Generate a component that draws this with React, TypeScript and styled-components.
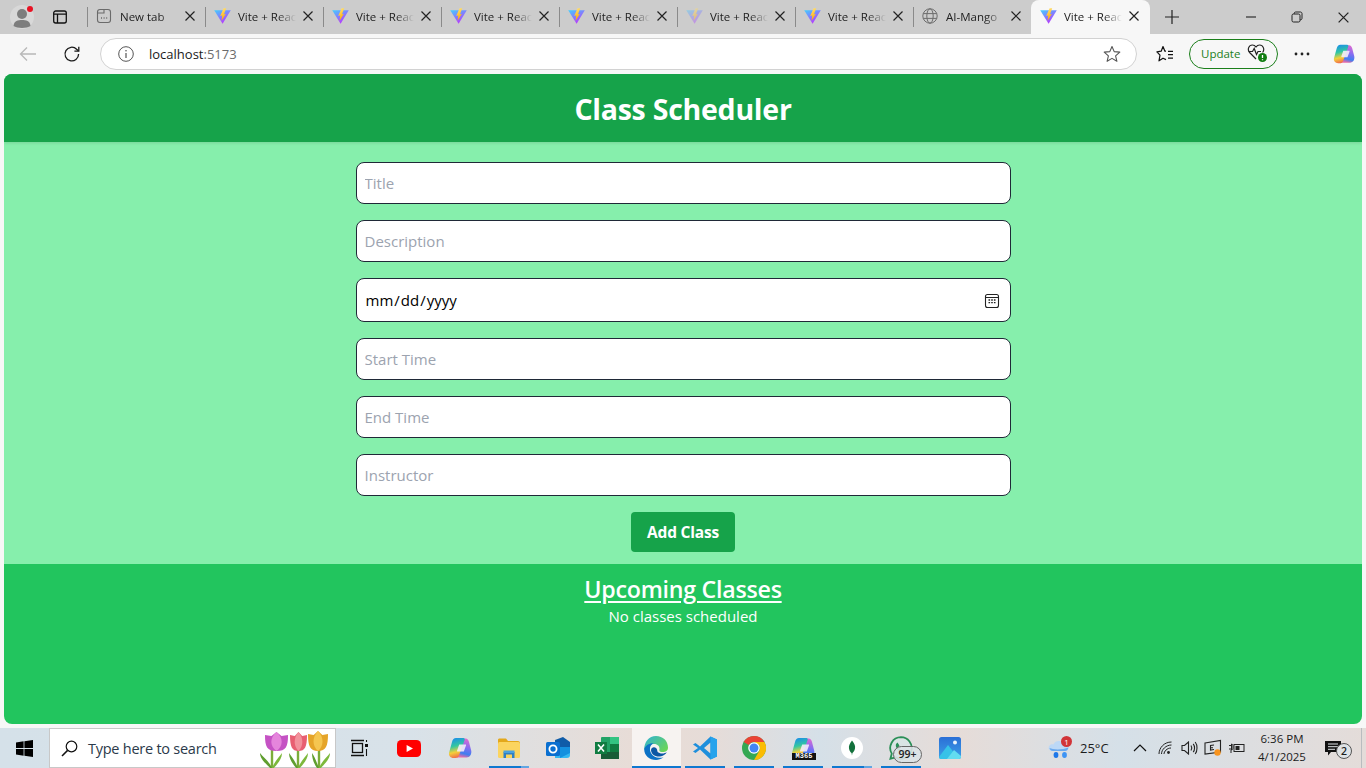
import React from "react";
import styled, { createGlobalStyle } from "styled-components";

const FONT = `"Open Sans", "Noto Sans", "Liberation Sans", sans-serif`;

const CALENDAR = `url("data:image/svg+xml,%3Csvg xmlns='http://www.w3.org/2000/svg' width='16' height='16' viewBox='0 0 16 16' fill='none' stroke='%23222' stroke-width='1.1'%3E%3Crect x='1.5' y='1.5' width='13' height='13' rx='2'/%3E%3Cpath d='M1.5 4.5H14.5'/%3E%3Cpath d='M4.5 7h1.6M7.2 7h1.6M9.9 7h1.6M4.5 9.6h1.6M7.2 9.6h1.6M9.9 9.6h1.6' stroke-width='1.4'/%3E%3C/svg%3E")`;

const Global = createGlobalStyle`
  html, body { margin: 0; padding: 0; height: 768px; overflow: hidden; }
  * { box-sizing: border-box; }
  body { font-family: ${FONT}; background: #f7f7f7; }
`;

const Screen = styled.div`
  width: 1366px;
  height: 768px;
  display: flex;
  flex-direction: column;
  overflow: hidden;
`;

/* ---------- browser tab strip ---------- */
const TabStrip = styled.div`
  height: 34px;
  background: #cccccc;
  display: flex;
  align-items: stretch;
  flex: none;
`;
const StripLeft = styled.div`
  width: 87px;
  position: relative;
  display: flex;
  align-items: center;
  padding-left: 10px;
  gap: 15px;
  flex: none;
`;
const RedDot = styled.span`
  position: absolute;
  left: 27px;
  top: 6px;
  width: 6px;
  height: 6px;
  border-radius: 50%;
  background: #e81123;
`;
const Tab = styled.div<{ $active?: boolean }>`
  width: ${(p) => (p.$active ? 119 : 118)}px;
  flex: none;
  display: flex;
  align-items: center;
  position: relative;
  padding: 0 0 2px 8px;
  background: ${(p) => (p.$active ? "#f7f7f7" : "transparent")};
  border-radius: ${(p) => (p.$active ? "8px 8px 0 0" : "0")};
  &::before {
    content: "";
    display: ${(p) => (p.$active ? "none" : "block")};
    position: absolute;
    left: 0;
    top: 7px;
    bottom: 7px;
    width: 1px;
    background: #8a8a8a;
  }
`;
const TabIcon = styled.span`
  width: 18px;
  height: 18px;
  flex: none;
  display: flex;
  align-items: center;
  justify-content: center;
`;
const TabLabel = styled.span`
  margin-left: 7px;
  width: 58px;
  flex: none;
  font-size: 11.5px;
  color: #222;
  white-space: nowrap;
  overflow: hidden;
  -webkit-mask-image: linear-gradient(90deg, #000 68%, transparent 100%);
  mask-image: linear-gradient(90deg, #000 68%, transparent 100%);
`;
const TabClose = styled.span`
  margin-left: 6px;
  width: 12px;
  height: 12px;
  flex: none;
  display: flex;
`;
const NewTab = styled.div`
  width: 44px;
  display: flex;
  align-items: center;
  justify-content: center;
  flex: none;
`;
const WindowControls = styled.div`
  margin-left: auto;
  display: flex;
  align-items: center;
`;
const WinButton = styled.div`
  width: 46px;
  height: 34px;
  display: flex;
  align-items: center;
  justify-content: center;
`;

/* ---------- address bar ---------- */
const Toolbar = styled.div`
  height: 40px;
  background: #f7f7f7;
  flex: none;
  display: flex;
  align-items: center;
  padding: 0 4px 0 0;
`;
const NavBtn = styled.div<{ $w: number }>`
  width: ${(p) => p.$w}px;
  display: flex;
  justify-content: center;
  align-items: center;
  flex: none;
`;
const FavButton = styled.div`
  width: 52px;
  padding-left: 4px;
  display: flex;
  justify-content: center;
  align-items: center;
  flex: none;
`;
const AddressBar = styled.div`
  width: 1037px;
  height: 32px;
  flex: none;
  margin-left: 12px;
  border: 1px solid #d2d2d2;
  border-radius: 16px;
  background: #fff;
  display: flex;
  align-items: center;
  padding: 0 15px 0 17px;
`;
const Url = styled.span`
  margin-left: 15px;
  font-size: 13px;
  color: #1a1a1a;
`;
const UrlPort = styled.span`
  color: #6b6b6b;
`;
const AddressEnd = styled.span`
  margin-left: auto;
  display: flex;
`;
const UpdatePill = styled.div`
  width: 89px;
  height: 30px;
  flex: none;
  border: 1px solid #1b7f1b;
  border-radius: 15px;
  display: flex;
  align-items: center;
  padding: 0 8px 2px 11px;
  justify-content: space-between;
  font-size: 11.5px;
  color: #1b7f1b;
`;

/* ---------- page ---------- */
const Page = styled.main`
  margin: 0 4px;
  height: 650px;
  flex: none;
  border-radius: 8px;
  overflow: hidden;
  display: flex;
  flex-direction: column;
  background: #22c55e;
`;
const Header = styled.header`
  height: 68px;
  flex: none;
  padding-top: 1px;
  background: #16a34a;
  color: #fff;
  display: flex;
  align-items: center;
  justify-content: center;
  box-shadow: 0 1px 3px rgba(0, 0, 0, 0.12);
  position: relative;
`;
const Title = styled.h1`
  margin: 0;
  font-size: 28.5px;
  font-weight: 700;
  letter-spacing: -0.25px;
`;
const FormPanel = styled.form`
  height: 422px;
  flex: none;
  background: #86efac;
  padding-top: 20px;
  display: flex;
  flex-direction: column;
  align-items: center;
  gap: 16px;
`;
const Field = styled.input<{ $date?: boolean }>`
  width: 655px;
  height: ${(p) => (p.$date ? 44 : 42)}px;
  flex: none;
  border: 1px solid #1f2937;
  border-radius: 8px;
  background: #fff;
  padding: 0 8px;
  font-family: ${FONT};
  font-size: 15px;
  color: #000;
  outline: none;
  &::placeholder {
    color: #9ca3af;
    opacity: 1;
  }
  &::-webkit-calendar-picker-indicator {
    background-image: ${CALENDAR};
    background-size: 16px 16px;
    opacity: 1;
    margin-right: 1px;
  }
`;
const Submit = styled.button`
  width: 104px;
  height: 40px;
  flex: none;
  border: 0;
  border-radius: 4px;
  background: #16a34a;
  color: #fff;
  font-family: ${FONT};
  font-size: 15.5px;
  font-weight: 700;
  letter-spacing: -0.2px;
`;
const ListPanel = styled.section`
  flex: 1;
  color: #fff;
  text-align: center;
  padding-top: 10px;
`;
const ListTitle = styled.h2`
  margin: 0;
  font-size: 23.2px;
  line-height: 31px;
  font-weight: 600;
  text-decoration: underline;
  text-decoration-thickness: 2px;
  text-underline-offset: 3px;
  letter-spacing: -0.25px;
`;
const Empty = styled.p`
  margin: 0;
  font-size: 15px;
  line-height: 22px;
`;

/* ---------- taskbar ---------- */
const Taskbar = styled.footer`
  margin-top: 4px;
  height: 40px;
  flex: none;
  display: flex;
  align-items: stretch;
  background: linear-gradient(90deg, #d5e1e9 0%, #d8e2e9 30%, #e8dcd6 47%, #e6dcd8 52%, #d5e0e8 60%, #e6dcd8 70%, #d5e0e8 82%, #e4dcd9 100%);
`;
const StartBtn = styled.div`
  width: 49px;
  flex: none;
  display: flex;
  align-items: center;
  justify-content: center;
`;
const SearchBox = styled.div`
  width: 287px;
  flex: none;
  background: #fff;
  border: 1px solid #c8c8c8;
  display: flex;
  align-items: center;
  padding-left: 11px;
  position: relative;
  font-size: 14.5px;
  color: #2b3a4a;
`;
const SearchText = styled.span`
  margin-left: 10px;
  letter-spacing: -0.25px;
`;
const TulipArt = styled.svg`
  position: absolute;
  left: 208px;
  top: -1px;
`;
const AppRow = styled.div`
  display: flex;
  flex: none;
`;
const AppSlot = styled.div<{ $w?: number; $active?: boolean }>`
  width: ${(p) => p.$w ?? 49}px;
  flex: none;
  position: relative;
  display: flex;
  align-items: center;
  justify-content: center;
  padding-right: 2px;
  background: ${(p) => (p.$active ? "rgba(255,255,255,0.65)" : "transparent")};
`;
const RunBar = styled.span<{ $split?: boolean; $full?: boolean }>`
  position: absolute;
  left: ${(p) => (p.$full ? 0 : 4)}px;
  right: ${(p) => (p.$full ? 0 : 5)}px;
  bottom: 0;
  height: 2px;
  background: ${(p) =>
    p.$split ? "linear-gradient(90deg,#0f78d0 80%,#62a6e2 80%)" : "#0f78d0"};
`;
const Count = styled.span`
  position: absolute;
  left: 16px;
  top: 18px;
  width: 29px;
  height: 17px;
  border: 1px solid #666;
  border-radius: 9px;
  background: rgba(220, 226, 230, 0.9);
  font-size: 10.5px;
  font-weight: 600;
  line-height: 15px;
  text-align: center;
  color: #222;
`;
const Tray = styled.div`
  margin-left: auto;
  display: flex;
  align-items: center;
  padding-right: 15px;
  position: relative;
  font-size: 12px;
  color: #1c1c1c;
  &::after {
    content: "";
    position: absolute;
    right: 4px;
    top: 0;
    bottom: 0;
    width: 1px;
    background: #b9bcbf;
  }
`;
const TrayItem = styled.div<{ $w: number }>`
  width: ${(p) => p.$w}px;
  height: 40px;
  flex: none;
  display: flex;
  align-items: center;
  justify-content: center;
  position: relative;
`;
const WeatherSlot = styled.div`
  width: 79px;
  height: 40px;
  flex: none;
  display: flex;
  align-items: center;
  position: relative;
`;
const Weather = styled.span`
  font-size: 13px;
  margin-left: 8px;
`;
const Clock = styled.div`
  width: 66px;
  text-align: center;
  font-size: 11.5px;
  line-height: 18px;
  flex: none;
`;
const NotifNum = styled.span`
  position: absolute;
  left: 21px;
  top: 15px;
  width: 16px;
  height: 16px;
  border-radius: 50%;
  border: 1px solid #555;
  background: #dfe3e6;
  font-size: 10.5px;
  font-weight: 600;
  line-height: 14px;
  text-align: center;
`;
const WeatherBadge = styled.span`
  position: absolute;
  left: 13px;
  top: 8px;
  width: 11px;
  height: 11px;
  border-radius: 50%;
  background: #d13438;
  color: #fff;
  font-size: 8px;
  line-height: 11px;
  text-align: center;
`;
const M365Badge = styled.span`
  position: absolute;
  left: 13px;
  top: 25px;
  width: 24px;
  height: 7px;
  background: #111;
  color: #fff;
  font-family: "Liberation Mono", monospace;
  font-size: 7px;
  font-weight: 700;
  line-height: 7px;
  text-align: center;
`;

/* ---------- icons ---------- */
const Vite = ({ faded }: { faded?: boolean }) => (
  <svg width="17" height="16" viewBox="0 0 17 16" opacity={faded ? 0.4 : 1}>
    <defs>
      <linearGradient id="vt" x1="0" y1="0" x2="0.6" y2="1">
        <stop offset="0" stopColor="#41d1ff" />
        <stop offset="1" stopColor="#bd34fe" />
      </linearGradient>
      <linearGradient id="vb" x1="0" y1="0" x2="0.3" y2="1">
        <stop offset="0" stopColor="#ffea83" />
        <stop offset="1" stopColor="#ffa800" />
      </linearGradient>
    </defs>
    <path d="M0.2 2.2 L16.8 2.2 L8.6 15.8 Z" fill="url(#vt)" />
    <path d="M9.6 0.3 L12.2 0.3 L10 6.2 L11.8 6 L7.6 12.8 L8.2 7.6 L6.2 7.9 Z" fill="url(#vb)" />
  </svg>
);
const X = ({ s = 12, c = "#222" }: { s?: number; c?: string }) => (
  <svg width={s} height={s} viewBox="0 0 12 12">
    <path d="M1.5 1.5 L10.5 10.5 M10.5 1.5 L1.5 10.5" stroke={c} strokeWidth="1.2" fill="none" />
  </svg>
);
const Avatar = () => (
  <svg width="24" height="24" viewBox="0 0 24 24">
    <circle cx="12" cy="12" r="12" fill="#d8d8d8" />
    <circle cx="12" cy="9" r="5" fill="#7d7d7d" />
    <path d="M3.5 21 C4 15.5 8 15 12 15 C16 15 20 15.5 20.5 21 C17 23.5 7 23.5 3.5 21 Z" fill="#7d7d7d" />
  </svg>
);
const TabsIcon = () => (
  <svg width="16" height="16" viewBox="0 0 16 16" fill="none" stroke="#111" strokeWidth="1.3">
    <rect x="1.7" y="2" width="12.6" height="12" rx="2" />
    <path d="M1.7 5.2 H14.3 M5.5 5.2 V14" />
  </svg>
);
const NewTabIcon = () => (
  <svg width="16" height="16" viewBox="0 0 16 16" fill="none" stroke="#6a6a6a" strokeWidth="1.1">
    <rect x="1.5" y="1.5" width="13" height="13" rx="2.5" />
    <path d="M1.5 5 H8 V1.5" />
    <path d="M5 10 h1 M7.6 10 h1 M10.2 10 h1" strokeWidth="1.3" />
  </svg>
);
const Globe = () => (
  <svg width="16" height="16" viewBox="0 0 16 16" fill="none" stroke="#6d6d6d" strokeWidth="1">
    <circle cx="8" cy="8" r="7.2" />
    <ellipse cx="8" cy="8" rx="3.2" ry="7.2" />
    <path d="M1.2 5.6 H14.8 M1.2 10.4 H14.8" />
  </svg>
);
const Plus = () => (
  <svg width="16" height="16" viewBox="0 0 16 16">
    <path d="M8 1 V15 M1 8 H15" stroke="#222" strokeWidth="1.2" />
  </svg>
);
const Minimize = () => (
  <svg width="12" height="12" viewBox="0 0 12 12">
    <path d="M1 6 H11" stroke="#222" strokeWidth="1.1" />
  </svg>
);
const Restore = () => (
  <svg width="12" height="12" viewBox="0 0 12 12" fill="none" stroke="#222" strokeWidth="1">
    <rect x="1" y="3" width="8" height="8" rx="1.5" />
    <path d="M3.2 3 V2.4 C3.2 1.6 3.8 1 4.6 1 H9.5 C10.3 1 11 1.7 11 2.5 V7.4 C11 8.2 10.4 8.8 9.6 8.8 H9" />
  </svg>
);
const Back = () => (
  <svg width="18" height="16" viewBox="0 0 18 16" fill="none" stroke="#b8b8b8" strokeWidth="1.3">
    <path d="M17 8 H1.5 M8 1.5 L1.5 8 L8 14.5" />
  </svg>
);
const Reload = () => (
  <svg width="18" height="18" viewBox="0 0 18 18" fill="none" stroke="#1a1a1a" strokeWidth="1.3">
    <path d="M15.6 9 A6.8 6.8 0 1 1 13.6 4.2 L15.6 6" />
    <path d="M15.8 1.8 V6.2 H11.4" />
  </svg>
);
const Info = () => (
  <svg width="16" height="16" viewBox="0 0 16 16" fill="none" stroke="#555" strokeWidth="1">
    <circle cx="8" cy="8" r="7.3" />
    <path d="M8 7 V12" strokeWidth="1.2" />
    <circle cx="8" cy="4.8" r="0.8" fill="#555" stroke="none" />
  </svg>
);
const Star = () => (
  <svg width="18" height="18" viewBox="0 0 18 18" fill="none" stroke="#555" strokeWidth="1.1" strokeLinejoin="round">
    <path d="M9 1.5 L11.2 6.6 L16.8 7.1 L12.6 10.8 L13.9 16.3 L9 13.4 L4.1 16.3 L5.4 10.8 L1.2 7.1 L6.8 6.6 Z" />
  </svg>
);
const Favorites = () => (
  <svg width="18" height="18" viewBox="0 0 18 18" fill="none" stroke="#111" strokeWidth="1.2" strokeLinejoin="round">
    <path d="M10 6.2 H8.9 L7 1.5 L5.2 6.2 L0.9 6.8 L4 10.2 L3 15.8 L7 13.2 L10 14.6" />
    <path d="M12 6.3 H17 M12 9.7 H17 M12 13.2 H17" />
  </svg>
);
const Health = () => (
  <svg width="22" height="20" viewBox="0 0 22 20">
    <path d="M9 16 L2.6 9.5 C0 6.5 1.8 2 5.4 2 C7 2 8.2 2.8 9 4 C9.8 2.8 11 2 12.6 2 C16.2 2 18 6.5 15.6 9.5" fill="none" stroke="#222" strokeWidth="1.2" />
    <path d="M1.8 8.5 H5.5 L7.2 5.5 L9.5 11.5 L11 8.5 H14" fill="none" stroke="#222" strokeWidth="1.2" />
    <circle cx="15.5" cy="14.5" r="4.5" fill="#107c10" />
    <path d="M15.5 12 V15 M15.5 16.2 V17.2" stroke="#fff" strokeWidth="1.3" />
  </svg>
);
const Dots = () => (
  <svg width="16" height="4" viewBox="0 0 16 4" fill="#222">
    <circle cx="2" cy="2" r="1.4" />
    <circle cx="8" cy="2" r="1.4" />
    <circle cx="14" cy="2" r="1.4" />
  </svg>
);
const Copilot = ({ s = 22, id = "cp" }: { s?: number; id?: string }) => (
  <svg width={s} height={s} viewBox="0 0 24 24">
    <defs>
      <linearGradient id={`${id}a`} x1="0.3" y1="0" x2="0.5" y2="1">
        <stop offset="0" stopColor="#1a8fe8" />
        <stop offset="0.4" stopColor="#33c7a0" />
        <stop offset="0.7" stopColor="#f4d03a" />
        <stop offset="1" stopColor="#f0654a" />
      </linearGradient>
      <linearGradient id={`${id}b`} x1="0.7" y1="0" x2="0.5" y2="1">
        <stop offset="0" stopColor="#e06ad0" />
        <stop offset="0.45" stopColor="#8a6cf0" />
        <stop offset="0.8" stopColor="#3f7ff0" />
        <stop offset="1" stopColor="#e86ca8" />
      </linearGradient>
    </defs>
    <path d="M15 2.5 H17.5 C19.5 2.5 20.4 4 21 6 L23.2 14.5 C23.9 18 22 21.5 18.5 21.5 H9 C8 21.5 7.6 20.6 8 19.5 L13 5 C13.5 3.5 14 2.5 15 2.5 Z" fill={`url(#${id}b)`} />
    <path d="M8 2 H15.5 C16.6 2 17 3 16.6 4 L11 19.5 C10.4 21.3 9 22 7.5 22 H5.5 C2.5 22 0.6 19.8 1 17 L4 6 C4.6 3.5 6 2 8 2 Z" fill={`url(#${id}a)`} />
    <path d="M11.2 8.5 H17.5 C18 8.5 18.2 9 18 9.5 L15.8 15.5 H9.6 C9 15.5 8.9 15 9.1 14.5 Z" fill="#f6eefc" opacity="0.88" />
  </svg>
);
const WinLogo = () => (
  <svg width="17" height="17" viewBox="0 0 17 17" fill="#000">
    <path d="M0 2.4 L7.6 1.3 V8 H0 Z M8.4 1.2 L17 0 V8 H8.4 Z M0 9 H7.6 V15.7 L0 14.6 Z M8.4 9 H17 V17 L8.4 15.8 Z" />
  </svg>
);
const SearchGlass = () => (
  <svg width="17" height="17" viewBox="0 0 17 17" fill="none" stroke="#111" strokeWidth="1.2">
    <circle cx="10.5" cy="6.5" r="5.3" />
    <path d="M6.6 10.4 L1 16" strokeWidth="1.5" />
  </svg>
);
const Bloom = ({ x, w, top, c, d }: { x: number; w: number; top: number; c: string; d: string }) => {
  const cx = x + w / 2;
  return (
    <g>
      <path
        d={`M${x} ${top + 3} C${x} ${top + 15} ${x + 2} 23 ${cx} 23 C${x + w - 2} 23 ${x + w} ${top + 15} ${x + w} ${top + 3} L${x + w * 0.72} ${top + 4} L${cx} ${top} L${x + w * 0.28} ${top + 4} Z`}
        fill={c}
      />
      <path
        d={`M${cx} ${top} C${x + w * 0.8} ${top + 6} ${x + w * 0.8} 18 ${cx} 23 C${x + w * 0.2} 18 ${x + w * 0.2} ${top + 6} ${cx} ${top} Z`}
        fill={d}
      />
    </g>
  );
};
const Plant = ({ x, l, r }: { x: number; l: number; r: number }) => (
  <g>
    <path d={`M${x} 22 V40`} stroke="#7cad3a" strokeWidth="2.4" />
    <path d={`M${x} 40 C${x - 3} 33 ${x - l + 3} 29 ${x - l} 25 C${x - l} 32 ${x - 4} 37 ${x - 2} 40 Z`} fill="#5f9e2f" />
    <path d={`M${x} 40 C${x + 3} 33 ${x + r - 3} 29 ${x + r} 25 C${x + r} 32 ${x + 4} 37 ${x + 2} 40 Z`} fill="#7db83c" />
  </g>
);
const Tulips = () => (
  <TulipArt width="75" height="40" viewBox="0 0 75 40">
    <Plant x={14} l={12} r={10} />
    <Plant x={40} l={9} r={10} />
    <Plant x={61} l={7} r={11} />
    <Bloom x={7} w={23} top={4} c="#c552c4" d="#e585dc" />
    <Bloom x={32} w={17} top={4} c="#e85f72" d="#f2929c" />
    <Bloom x={50} w={20} top={3} c="#e5a428" d="#f5c650" />
  </TulipArt>
);
const TaskView = () => (
  <svg width="18" height="18" viewBox="0 0 18 18" fill="none" stroke="#111" strokeWidth="1.3">
    <rect x="2.5" y="4.5" width="10" height="9" />
    <path d="M1 1.5 H14 M1 16.5 H14" />
    <path d="M16.5 1 V3 M16.5 10 V17" strokeWidth="1.1" />
    <rect x="15" y="5" width="3" height="3" fill="#111" stroke="none" />
  </svg>
);
const YouTube = () => (
  <svg width="24" height="17" viewBox="0 0 24 17">
    <rect width="24" height="17" rx="4.5" fill="#f00" />
    <path d="M9.6 5 L16 8.5 L9.6 12 Z" fill="#fff" />
  </svg>
);
const Explorer = () => (
  <svg width="22" height="20" viewBox="0 0 22 20">
    <path d="M0 2 C0 1 .7.5 1.5.5 H8 L10 3 H20 C21 3 22 3.8 22 5 V7 H0 Z" fill="#e3a81b" />
    <rect y="4" width="22" height="16" rx="1.5" fill="#fbd45f" />
    <path d="M5.5 14 H16.5 V20 H14 V16.5 H8 V20 H5.5 Z" fill="#2f7fc4" />
    <rect x="5.5" y="12.5" width="11" height="2.5" fill="#4aa1de" />
  </svg>
);
const Outlook = () => (
  <svg width="24" height="22" viewBox="0 0 24 22">
    <path d="M9 3 L17 0 L24 5 V10 H9 Z" fill="#0f5ca8" />
    <path d="M9 10 H24 V18 C24 20 23 21 21 21 H9 Z" fill="#35b8f1" />
    <path d="M14 10 L24 10 V16 L14 21 Z" fill="#1490df" />
    <rect y="5" width="14" height="14" rx="1.5" fill="#0a6fd0" />
    <circle cx="7" cy="12" r="3.6" fill="none" stroke="#fff" strokeWidth="1.8" />
  </svg>
);
const Excel = () => (
  <svg width="24" height="22" viewBox="0 0 24 22">
    <rect x="6" width="18" height="22" rx="1" fill="#21a366" />
    <rect x="15" width="9" height="7" fill="#33c481" />
    <rect x="15" y="7" width="9" height="8" fill="#107c41" />
    <rect x="6" y="15" width="18" height="7" fill="#185c37" />
    <rect y="5" width="12" height="12" fill="#107c41" />
    <path d="M3 7.5 L9 14.5 M9 7.5 L3 14.5" stroke="#fff" strokeWidth="1.6" />
  </svg>
);
const Edge = () => (
  <svg width="24" height="24" viewBox="0 0 24 24">
    <defs>
      <linearGradient id="eg" x1="0" y1="0" x2="1" y2="0.7">
        <stop offset="0" stopColor="#2fb2d8" />
        <stop offset="1" stopColor="#6ad45a" />
      </linearGradient>
    </defs>
    <path d="M12 0 C19 0 24 5 24 11.5 C24 15.5 20.5 16.5 17.5 16 C14.5 15.5 15.5 14 15.5 12.5 C15.5 9 12 7.5 9 8 C5 8.6 1.6 11 0.2 14 C0 6 5 0 12 0 Z" fill="url(#eg)" />
    <path d="M0.2 13 C1.5 9 5.5 6.8 9.5 7.2 C6 9 5 13 7 17 C9 21 14 23 19.5 21.2 C17 23 14.5 24 12 24 C5.5 24 0 19.5 0.2 13 Z" fill="#0c72c6" />
    <path d="M7 14 C7 18 11 21 16 20.5 C19 20 21.5 18.5 23 16 C21 17.5 18 18 15.5 17 C12.5 16 14 15 12.5 12.5 C10.5 10.5 7.5 11 7 14 Z" fill="#0b57a4" />
  </svg>
);
const VSCode = () => (
  <svg width="24" height="24" viewBox="0 0 24 24">
    <path d="M17.5 0.5 L24 3.5 V20.5 L17.5 23.5 L7 13.5 L2.5 17 L0 15.5 L5 12 L0 8.5 L2.5 7 L7 10.5 Z M17.5 6.5 L11 12 L17.5 17.5 Z" fill="#1f8fdc" />
    <path d="M17.5 0.5 L24 3.5 V20.5 L17.5 23.5 Z M17.5 6.5 V17.5 L17.5 17.5 Z" fill="#27a3ec" />
  </svg>
);
const Chrome = () => (
  <svg width="24" height="24" viewBox="0 0 24 24">
    <circle cx="12" cy="12" r="12" fill="#34a853" />
    <path d="M12 0 A12 12 0 0 1 22.4 6 H12 A6 6 0 0 0 6.8 9 L1.6 6 A12 12 0 0 1 12 0 Z" fill="#ea4335" />
    <path d="M22.4 6 A12 12 0 0 1 12 24 L17.2 15 A6 6 0 0 0 17.2 9 L12 6 Z" fill="#fbbc04" />
    <circle cx="12" cy="12" r="5.8" fill="#fff" />
    <circle cx="12" cy="12" r="4.5" fill="#4285f4" />
  </svg>
);
const Mongo = () => (
  <svg width="22" height="22" viewBox="0 0 22 22">
    <circle cx="11" cy="11" r="11" fill="#fff" />
    <path d="M11 3.5 C13.5 6.5 14.5 9 14 11.5 C13.6 14 12 15.5 11.4 16 L11 18.5 L10.6 16 C9.8 15.4 8.4 14 8 11.5 C7.6 9 8.6 6.5 11 3.5 Z" fill="#13713c" />
  </svg>
);
const WhatsApp = () => (
  <svg width="24" height="24" viewBox="0 0 24 24">
    <path d="M12 1.2 A10.8 10.8 0 1 1 6.6 21.4 L1.4 22.7 L2.8 17.6 A10.8 10.8 0 0 1 12 1.2 Z" fill="#d9e4e4" stroke="#2a8f57" strokeWidth="1.8" />
    <path d="M8.5 6.5 L10.4 9.5 L9.6 11 C10.5 13 11.5 14 13.4 15 L15 13.8 L18 15.8 C17 18.2 14.6 18 12 16.6 C9 15 6 11 7 8 Z" fill="#2a8f57" />
  </svg>
);
const Photos = () => (
  <svg width="22" height="22" viewBox="0 0 22 22">
    <defs>
      <linearGradient id="ph" x1="0" y1="0" x2="0" y2="1">
        <stop offset="0" stopColor="#2b6fd6" />
        <stop offset="1" stopColor="#3b9fe8" />
      </linearGradient>
    </defs>
    <rect width="22" height="22" rx="2.5" fill="url(#ph)" />
    <circle cx="16" cy="5.5" r="2" fill="#e8f3fc" />
    <path d="M0 20 L9 8 L20 22 H2 C1 22 0 21 0 20 Z" fill="#36c2e8" />
    <path d="M8 22 L15 13 L22 19 V20 C22 21 21 22 20 22 Z" fill="#63dcf0" />
  </svg>
);
const Cloud = () => (
  <svg width="24" height="24" viewBox="0 0 24 24">
    <path d="M5 15 C1 15 0 12.5 1 10.5 C2 8 4.5 8 5.5 8.5 C7 4.5 12 4 14.5 6.5 C18 6 21 8.5 20.5 12 C20.3 14 18.5 15 17 15 Z" fill="#bcd8f6" />
    <path d="M1.5 12 C5 14 15 14 20.5 11.5 C20 14 18.5 15 17 15 H5 C3 15 2 14 1.5 12 Z" fill="#6aa9ee" />
    <ellipse cx="8" cy="19" rx="2.4" ry="3" fill="#1e77e8" />
    <ellipse cx="16.5" cy="19" rx="2.4" ry="3" fill="#3e94f4" />
  </svg>
);
const Chevron = () => (
  <svg width="14" height="8" viewBox="0 0 14 8" fill="none" stroke="#111" strokeWidth="1.2">
    <path d="M1 7 L7 1 L13 7" />
  </svg>
);
const Wifi = () => (
  <svg width="14" height="14" viewBox="0 0 14 14" fill="none" stroke="#222" strokeWidth="1">
    <path d="M1 13 C1 7 6 1 13.5 1 M3.5 13 C3.5 8.5 8 4 13.5 4 M6 13 C6 10.5 9 7 13 7" />
    <circle cx="10.5" cy="11.5" r="1.4" fill="#222" stroke="none" />
  </svg>
);
const Speaker = () => (
  <svg width="17" height="14" viewBox="0 0 17 14" fill="none" stroke="#222" strokeWidth="1.1">
    <path d="M1 4.5 H3.5 L7.5 1 V13 L3.5 9.5 H1 Z" />
    <path d="M10 4.5 C11 6 11 8 10 9.5 M12.2 2.8 C14 5 14 9 12.2 11.2 M14.2 1 C16.6 4 16.6 10 14.2 13" />
  </svg>
);
const Device = () => (
  <svg width="18" height="18" viewBox="0 0 18 18">
    <path d="M1 4 L16.5 1.5 V13 L1 15 Z" fill="none" stroke="#222" strokeWidth="1.1" />
    <path d="M10 6 L6.5 6.5 V11 L10 10.5 M6.5 8.8 H9" fill="none" stroke="#222" strokeWidth="1.1" />
    <circle cx="13.5" cy="13.5" r="3.2" fill="#f7931e" />
  </svg>
);
const Battery = () => (
  <svg width="16" height="12" viewBox="0 0 16 12" fill="none" stroke="#222" strokeWidth="1">
    <rect x="5" y="2.5" width="10" height="7" />
    <rect x="6.5" y="4" width="4" height="4" fill="#222" stroke="none" />
    <path d="M0 3.5 H2.5 M0 7 H2.5 M2.5 2 V8 C3.5 8 4 7 4 5 C4 3 3.5 2 2.5 2 Z M2 8 V11" />
  </svg>
);
const Notif = () => (
  <svg width="16" height="15" viewBox="0 0 16 15" fill="#111">
    <path d="M0 0 H16 V11 H6 L3 14.5 V11 H0 Z" />
    <path d="M3 3 H13 M3 5.7 H13 M3 8.3 H10" stroke="#dfe3e6" strokeWidth="1" />
  </svg>
);

const viteTabs = [false, false, false, false, true, false];

export default function App() {
  return (
    <Screen>
      <Global />
      <TabStrip>
        <StripLeft>
          <Avatar />
          <RedDot />
          <NavBtn $w={22}>
            <TabsIcon />
          </NavBtn>
        </StripLeft>
        <Tab>
          <TabIcon><NewTabIcon /></TabIcon>
          <TabLabel>New tab</TabLabel>
          <TabClose><X /></TabClose>
        </Tab>
        {viteTabs.map((faded, i) => (
          <Tab key={i}>
            <TabIcon><Vite faded={faded} /></TabIcon>
            <TabLabel>Vite + React</TabLabel>
            <TabClose><X /></TabClose>
          </Tab>
        ))}
        <Tab>
          <TabIcon><Globe /></TabIcon>
          <TabLabel>AI-Mango</TabLabel>
          <TabClose><X /></TabClose>
        </Tab>
        <Tab $active>
          <TabIcon><Vite /></TabIcon>
          <TabLabel>Vite + React</TabLabel>
          <TabClose><X /></TabClose>
        </Tab>
        <NewTab><Plus /></NewTab>
        <WindowControls>
          <WinButton><Minimize /></WinButton>
          <WinButton><Restore /></WinButton>
          <WinButton><X s={13} /></WinButton>
        </WindowControls>
      </TabStrip>

      <Toolbar>
        <NavBtn $w={56}><Back /></NavBtn>
        <NavBtn $w={32}><Reload /></NavBtn>
        <AddressBar>
          <Info />
          <Url>localhost<UrlPort>:5173</UrlPort></Url>
          <AddressEnd><Star /></AddressEnd>
        </AddressBar>
        <FavButton><Favorites /></FavButton>
        <UpdatePill>
          Update
          <Health />
        </UpdatePill>
        <NavBtn $w={48}><Dots /></NavBtn>
        <NavBtn $w={36}><Copilot id="cpt" /></NavBtn>
      </Toolbar>

      <Page>
        <Header>
          <Title>Class Scheduler</Title>
        </Header>
        <FormPanel>
          <Field placeholder="Title" />
          <Field placeholder="Description" />
          <Field type="date" $date />
          <Field placeholder="Start Time" />
          <Field placeholder="End Time" />
          <Field placeholder="Instructor" />
          <Submit type="button">Add Class</Submit>
        </FormPanel>
        <ListPanel>
          <ListTitle>Upcoming Classes</ListTitle>
          <Empty>No classes scheduled</Empty>
        </ListPanel>
      </Page>

      <Taskbar>
        <StartBtn><WinLogo /></StartBtn>
        <SearchBox>
          <SearchGlass />
          <SearchText>Type here to search</SearchText>
          <Tulips />
        </SearchBox>
        <AppRow>
          <AppSlot $w={48}><TaskView /></AppSlot>
          <AppSlot $w={52}><YouTube /></AppSlot>
          <AppSlot><Copilot s={24} id="cp1" /></AppSlot>
          <AppSlot><Explorer /><RunBar $split /></AppSlot>
          <AppSlot><Outlook /></AppSlot>
          <AppSlot><Excel /></AppSlot>
          <AppSlot $active><Edge /><RunBar $full /></AppSlot>
          <AppSlot><VSCode /><RunBar /></AppSlot>
          <AppSlot><Chrome /><RunBar /></AppSlot>
          <AppSlot>
            <Copilot s={24} id="cp2" />
            <M365Badge>M365</M365Badge>
            <RunBar />
          </AppSlot>
          <AppSlot><Mongo /><RunBar $split /></AppSlot>
          <AppSlot><WhatsApp /><Count>99+</Count><RunBar /></AppSlot>
          <AppSlot><Photos /></AppSlot>
        </AppRow>
        <Tray>
          <WeatherSlot>
            <Cloud />
            <WeatherBadge>1</WeatherBadge>
            <Weather>25°C</Weather>
          </WeatherSlot>
          <TrayItem $w={26}><Chevron /></TrayItem>
          <TrayItem $w={24}><Wifi /></TrayItem>
          <TrayItem $w={24}><Speaker /></TrayItem>
          <TrayItem $w={24}><Device /></TrayItem>
          <TrayItem $w={24}><Battery /></TrayItem>
          <Clock>6:36 PM<br />4/1/2025</Clock>
          <TrayItem $w={36}><Notif /><NotifNum>2</NotifNum></TrayItem>
        </Tray>
      </Taskbar>
    </Screen>
  );
}
